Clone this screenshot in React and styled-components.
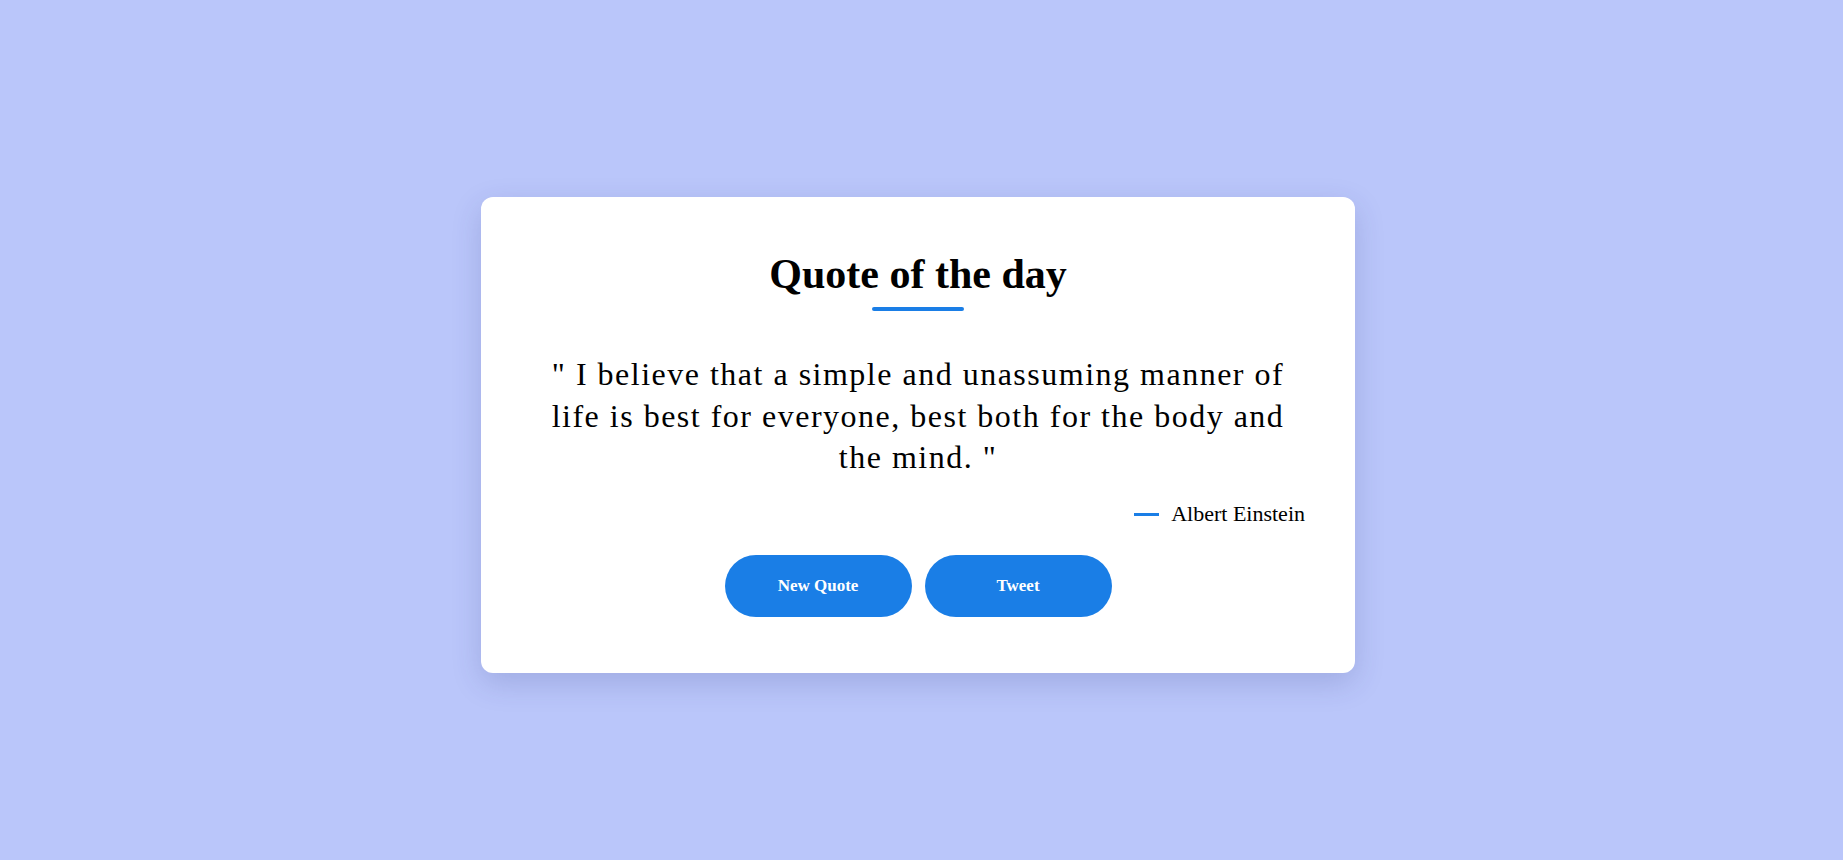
import React from 'react'
import styled, { createGlobalStyle } from 'styled-components'

const GlobalStyle = createGlobalStyle`
  * { box-sizing: border-box; }
  body {
    margin: 0;
    background-color: #bac6fa;
    font-family: "Liberation Serif", "DejaVu Serif", serif;
  }
`

const Page = styled.div`
  min-height: 100vh;
  display: flex;
  align-items: center;
  justify-content: center;
  padding: 10px 7px 0 0;
`

const Card = styled.div`
  width: 874px;
  background: #fff;
  border-radius: 12px;
  padding: 52px 50px 56px;
  box-shadow: 0 10px 30px rgba(40, 50, 120, 0.18);
  display: flex;
  flex-direction: column;
  align-items: center;
`

const Title = styled.h1`
  margin: 0;
  font-size: 42px;
  line-height: 50px;
  font-weight: 700;
  color: #000;
`

const Underline = styled.div`
  width: 92px;
  height: 4px;
  border-radius: 2px;
  background: #1a7ee6;
  margin-top: 8px;
`

const Quote = styled.p`
  margin: 43px 0 0;
  max-width: 760px;
  text-align: center;
  font-size: 32px;
  line-height: 41.7px;
  letter-spacing: 1.5px;
  color: #000;
`

const Author = styled.div`
  align-self: flex-end;
  margin-top: 20px;
  display: flex;
  align-items: center;
  gap: 12px;
  font-size: 22px;
  line-height: 30px;
  color: #000;
`

const Dash = styled.span`
  width: 25px;
  height: 3px;
  background: #1a7ee6;
`

const Buttons = styled.div`
  display: flex;
  gap: 13px;
  margin-top: 26px;
`

const Button = styled.button`
  width: 187px;
  height: 62px;
  border: none;
  border-radius: 31px;
  background: #1a7ee6;
  color: #fff;
  font-family: inherit;
  font-size: 17px;
  font-weight: 700;
  cursor: pointer;
`

export default function App() {
  return (
    <>
      <GlobalStyle />
      <Page>
        <Card>
          <Title>Quote of the day</Title>
          <Underline />
          <Quote>
            " I believe that a simple and unassuming manner of life is best for everyone, best both for the body and the mind. "
          </Quote>
          <Author>
            <Dash />
            Albert Einstein
          </Author>
          <Buttons>
            <Button>New Quote</Button>
            <Button>Tweet</Button>
          </Buttons>
        </Card>
      </Page>
    </>
  )
}
